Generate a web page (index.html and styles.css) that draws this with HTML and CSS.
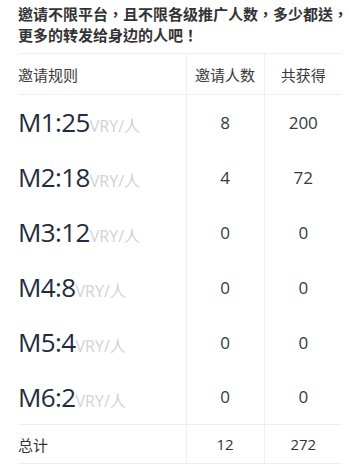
FILE: index.html
```html
<!DOCTYPE html>
<html lang="zh-CN">
<head>
<meta charset="utf-8">
<link rel="stylesheet" href="styles.css">
</head>
<body>
<div class="page">
  <p class="intro" lang="zh-TW">邀请不限平台，且不限各级推广人数，多少都送，更多的转发给身边的人吧！</p>
  <table class="rules">
    <colgroup>
      <col class="c-rule">
      <col class="c-num">
      <col class="c-num">
    </colgroup>
    <thead>
      <tr><th class="left">邀请规则</th><th>邀请人数</th><th>共获得</th></tr>
    </thead>
    <tbody>
      <tr><td class="left"><span class="big">M1:25</span><span class="unit">VRY/人</span></td><td>8</td><td>200</td></tr>
      <tr><td class="left"><span class="big">M2:18</span><span class="unit">VRY/人</span></td><td>4</td><td>72</td></tr>
      <tr><td class="left"><span class="big">M3:12</span><span class="unit">VRY/人</span></td><td>0</td><td>0</td></tr>
      <tr><td class="left"><span class="big">M4:8</span><span class="unit">VRY/人</span></td><td>0</td><td>0</td></tr>
      <tr><td class="left"><span class="big">M5:4</span><span class="unit">VRY/人</span></td><td>0</td><td>0</td></tr>
      <tr><td class="left"><span class="big">M6:2</span><span class="unit">VRY/人</span></td><td>0</td><td>0</td></tr>
    </tbody>
    <tfoot>
      <tr><td class="left">总计</td><td>12</td><td>272</td></tr>
    </tfoot>
  </table>
</div>
</body>
</html>
```
FILE: styles.css
```css
html, body {
  margin: 0;
  padding: 0;
  background: #fff;
}
body {
  font-family: "Open Sans", "Noto Sans CJK SC", sans-serif;
  color: #333;
}
.page {
  padding: 3px 0 0 18px;
}
.intro {
  margin: 0 0 8px 0;
  font-family: "Noto Sans CJK TC", "Noto Sans CJK SC", sans-serif;
  font-weight: bold;
  font-size: 15px;
  line-height: 21px;
  color: #333;
}
.rules {
  width: 324px;
  border-collapse: collapse;
  table-layout: fixed;
  border-top: 1px solid #eeeeee;
  border-bottom: 1px solid #eeeeee;
}
.c-rule { width: 168px; }
.c-num { width: 78px; }
.rules th,
.rules td {
  padding: 0;
  text-align: center;
  vertical-align: middle;
  border-left: 1px solid #eeeeee;
}
.rules th.left,
.rules td.left {
  text-align: left;
  border-left: none;
}
.rules thead tr {
  height: 41px;
  border-bottom: 1px solid #eeeeee;
}
.rules th {
  font-family: "Noto Sans CJK SC", sans-serif;
  font-weight: normal;
  font-size: 15px;
  color: #3a3a3a;
}
.rules tbody tr {
  height: 55px;
}
.rules tbody td {
  font-size: 17px;
  color: #333a44;
}
.big {
  font-size: 26px;
  letter-spacing: -0.6px;
  color: #1f2d3d;
}
.unit {
  font-size: 16px;
  color: #d2d2d2;
}
.rules tfoot tr {
  height: 39px;
  border-top: 1px solid #eeeeee;
}
.rules tfoot td {
  font-size: 15px;
  color: #333;
}
.rules tfoot td.left {
  font-family: "Noto Sans CJK SC", sans-serif;
}
```
